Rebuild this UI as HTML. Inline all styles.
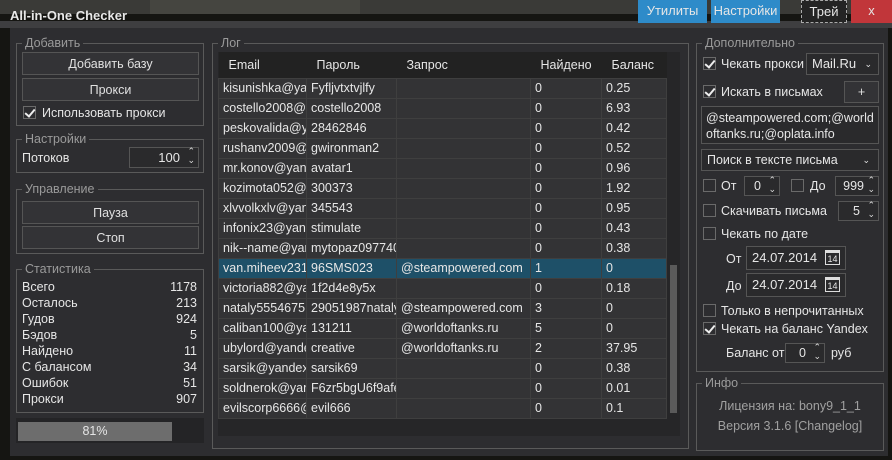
<!DOCTYPE html>
<html><head><meta charset="utf-8"><style>
*{box-sizing:border-box;margin:0;padding:0}
body{width:892px;height:460px;overflow:hidden;background:#151512;font-family:"Liberation Sans","DejaVu Sans",sans-serif;font-size:12.5px;color:#e6e6e6;position:relative}
.a{position:absolute}
.grp{position:absolute;border:1px solid #5a5a5a}
.gl{position:absolute;top:-8px;left:5px;background:#2d2d30;color:#9a9a9a;padding:0 3px;font-size:12.5px;line-height:14px}
.btn{position:absolute;border:1px solid #555;background:#333336;text-align:center;line-height:20px;color:#e0e0e0}
.cb{position:absolute;width:13px;height:13px;border:1px solid #6a6a6a;background:#2d2d30}
.cb.on::after{content:"";position:absolute;left:3px;top:0px;width:4px;height:8px;border:solid #eee;border-width:0 2px 2px 0;transform:rotate(40deg)}
.inp{position:absolute;border:1px solid #555;background:#2a2a2c;overflow:hidden}
.spin{position:absolute;border:1px solid #555;background:#2a2a2c;text-align:right;padding-right:18px;line-height:18px}
.spin::after{content:"⌃\A⌄";white-space:pre;position:absolute;right:3px;top:-1px;font-size:9px;line-height:9px;color:#ddd}
table{border-collapse:collapse;position:absolute;left:218px;top:52px;table-layout:fixed;width:448px}
td,th{height:20px;border:1px solid #3f3f3f;padding:0 4px;white-space:nowrap;overflow:hidden;text-overflow:clip;text-align:left;font-weight:normal}
th{height:26px;background:#222;border:none;padding-left:10px}
td{background:#333335}
tr.sel td{background:#1e5068}
.st{position:absolute;left:22px;width:175px;line-height:16px}
.st span{float:right}
</style></head><body>
<div class="a" style="left:0;top:0;width:892px;height:14px;background:#3a3a37"></div>
<div class="a" style="left:150px;top:0;width:210px;height:14px;background:#454540"></div>
<div class="a" style="left:0;top:21px;width:892px;height:7px;background:#3e3e40"></div>
<div class="a" style="left:10px;top:28px;width:878px;height:428px;background:#2d2d30"></div>
<div class="a" style="left:10px;top:8px;font-weight:bold;font-size:13px;color:#e8e8e8">All-in-One Checker</div>
<div class="a" style="left:638px;top:0;width:69px;height:23px;background:#2e8bc9;text-align:center;line-height:22px;font-size:13px">Утилиты</div>
<div class="a" style="left:711px;top:0;width:69px;height:23px;background:#2e8bc9;text-align:center;line-height:22px;font-size:13px">Настройки</div>
<div class="a" style="left:801px;top:0;width:46px;height:23px;background:#242424;border:1px dashed #aaa;text-align:center;line-height:21px;font-size:13px">Трей</div>
<div class="a" style="left:851px;top:0;width:41px;height:23px;background:#c1363a;text-align:center;line-height:22px;font-size:13px">x</div>

<div class="grp" style="left:16px;top:43px;width:188px;height:83px"><div class="gl">Добавить</div></div>
<div class="btn" style="left:22px;top:52px;width:177px;height:23px;line-height:22px">Добавить базу</div>
<div class="btn" style="left:22px;top:78px;width:177px;height:23px;line-height:22px">Прокси</div>
<div class="cb on" style="left:23px;top:106px"></div><div class="a" style="left:42px;top:106px">Использовать прокси</div>

<div class="grp" style="left:16px;top:139px;width:188px;height:34px"><div class="gl">Настройки</div></div>
<div class="a" style="left:22px;top:151px">Потоков</div>
<div class="spin" style="left:129px;top:147px;width:70px;height:21px;line-height:19px;font-size:13px">100</div>

<div class="grp" style="left:16px;top:189px;width:188px;height:65px"><div class="gl">Управление</div></div>
<div class="btn" style="left:22px;top:201px;width:177px;height:23px;line-height:22px">Пауза</div>
<div class="btn" style="left:22px;top:226px;width:177px;height:23px;line-height:22px">Стоп</div>

<div class="grp" style="left:16px;top:269px;width:188px;height:144px"><div class="gl">Статистика</div></div>
<div class="st" style="top:279px">Всего<span>1178</span></div>
<div class="st" style="top:295px">Осталось<span>213</span></div>
<div class="st" style="top:311px">Гудов<span>924</span></div>
<div class="st" style="top:327px">Бэдов<span>5</span></div>
<div class="st" style="top:343px">Найдено<span>11</span></div>
<div class="st" style="top:359px">С балансом<span>34</span></div>
<div class="st" style="top:375px">Ошибок<span>51</span></div>
<div class="st" style="top:391px">Прокси<span>907</span></div>
<div class="a" style="left:16px;top:418px;width:188px;height:25px;background:#242426"></div>
<div class="a" style="left:18px;top:422px;width:154px;height:19px;background:#6d6d6d;text-align:center;line-height:19px">81%</div>

<div class="grp" style="left:212px;top:43px;width:477px;height:406px"><div class="gl">Лог</div></div>
<div class="a" style="left:218px;top:52px;width:462px;height:384px;background:#262628"></div>
<table>
<colgroup><col style="width:88px"><col style="width:90px"><col style="width:134px"><col style="width:71px"><col style="width:65px"></colgroup>
<tr><th>Email</th><th>Пароль</th><th>Запрос</th><th>Найдено</th><th>Баланс</th></tr>
<tr><td>kisunishka@yandex.ru</td><td>Fyfljvtxtvjlfy</td><td></td><td>0</td><td>0.25</td></tr>
<tr><td>costello2008@yandex.ru</td><td>costello2008</td><td></td><td>0</td><td>6.93</td></tr>
<tr><td>peskovalida@yandex.ru</td><td>28462846</td><td></td><td>0</td><td>0.42</td></tr>
<tr><td>rushanv2009@yandex.ru</td><td>gwironman2</td><td></td><td>0</td><td>0.52</td></tr>
<tr><td>mr.konov@yandex.ru</td><td>avatar1</td><td></td><td>0</td><td>0.96</td></tr>
<tr><td>kozimota052@yandex.ru</td><td>300373</td><td></td><td>0</td><td>1.92</td></tr>
<tr><td>xlvvolkxlv@yandex.ru</td><td>345543</td><td></td><td>0</td><td>0.95</td></tr>
<tr><td>infonix23@yandex.ru</td><td>stimulate</td><td></td><td>0</td><td>0.43</td></tr>
<tr><td>nik--name@yandex.ru</td><td>mytopaz097740</td><td></td><td>0</td><td>0.38</td></tr>
<tr class="sel"><td>van.miheev2312@yandex.ru</td><td>96SMS023</td><td>@steampowered.com</td><td>1</td><td>0</td></tr>
<tr><td>victoria882@yandex.ru</td><td>1f2d4e8y5x</td><td></td><td>0</td><td>0.18</td></tr>
<tr><td>nataly5554675@yandex.ru</td><td>29051987nataly</td><td>@steampowered.com</td><td>3</td><td>0</td></tr>
<tr><td>caliban100@yandex.ru</td><td>131211</td><td>@worldoftanks.ru</td><td>5</td><td>0</td></tr>
<tr><td>ubylord@yandex.ru</td><td>creative</td><td>@worldoftanks.ru</td><td>2</td><td>37.95</td></tr>
<tr><td>sarsik@yandex.ru</td><td>sarsik69</td><td></td><td>0</td><td>0.38</td></tr>
<tr><td>soldnerok@yandex.ru</td><td>F6zr5bgU6f9afe</td><td></td><td>0</td><td>0.01</td></tr>
<tr><td>evilscorp6666@yandex.ru</td><td>evil666</td><td></td><td>0</td><td>0.1</td></tr>
</table>
<div class="a" style="left:670px;top:265px;width:7px;height:148px;background:#5a5a5a"></div>

<div class="grp" style="left:696px;top:43px;width:188px;height:329px"><div class="gl">Дополнительно</div></div>
<div class="cb on" style="left:703px;top:57px"></div><div class="a" style="left:721px;top:57px">Чекать прокси</div>
<div class="inp" style="left:806px;top:53px;width:73px;height:22px;line-height:20px;padding-left:5px;font-size:13px">Mail.Ru<span style="position:absolute;right:6px;font-size:9px">⌄</span></div>
<div class="cb on" style="left:703px;top:85px"></div><div class="a" style="left:721px;top:85px">Искать в письмах</div>
<div class="btn" style="left:844px;top:81px;width:35px;height:22px">+</div>
<div class="inp" style="left:701px;top:106px;width:178px;height:38px;padding:3px 4px;line-height:16px;word-break:break-all">@steampowered.com;@worldoftanks.ru;@oplata.info</div>
<div class="inp" style="left:701px;top:149px;width:178px;height:22px;line-height:20px;padding-left:5px">Поиск в тексте письма<span style="position:absolute;right:8px;font-size:9px">⌄</span></div>
<div class="cb" style="left:703px;top:179px"></div><div class="a" style="left:721px;top:179px">От</div>
<div class="spin" style="left:744px;top:176px;width:36px;height:20px">0</div>
<div class="cb" style="left:791px;top:179px"></div><div class="a" style="left:810px;top:179px">До</div>
<div class="spin" style="left:835px;top:176px;width:44px;height:20px;padding-right:14px">999</div>
<div class="cb" style="left:703px;top:204px"></div><div class="a" style="left:721px;top:204px">Скачивать письма</div>
<div class="spin" style="left:838px;top:201px;width:41px;height:20px">5</div>
<div class="cb" style="left:703px;top:227px"></div><div class="a" style="left:721px;top:227px">Чекать по дате</div>
<div class="a" style="left:726px;top:252px">От</div>
<div class="inp" style="left:746px;top:246px;width:100px;height:24px;line-height:22px;padding-left:5px;font-size:13px">24.07.2014<span style="position:absolute;right:5px;top:3px;width:15px;height:15px;border:1px solid #ddd;font-size:9px;line-height:12px;text-align:center;border-top-width:3px">14</span></div>
<div class="a" style="left:726px;top:279px">До</div>
<div class="inp" style="left:746px;top:273px;width:100px;height:24px;line-height:22px;padding-left:5px;font-size:13px">24.07.2014<span style="position:absolute;right:5px;top:3px;width:15px;height:15px;border:1px solid #ddd;font-size:9px;line-height:12px;text-align:center;border-top-width:3px">14</span></div>
<div class="cb" style="left:703px;top:304px"></div><div class="a" style="left:721px;top:304px">Только в непрочитанных</div>
<div class="cb on" style="left:703px;top:322px"></div><div class="a" style="left:721px;top:322px">Чекать на баланс Yandex</div>
<div class="a" style="left:726px;top:346px">Баланс от</div>
<div class="spin" style="left:785px;top:343px;width:40px;height:20px">0</div>
<div class="a" style="left:831px;top:346px">руб</div>

<div class="grp" style="left:696px;top:383px;width:188px;height:68px"><div class="gl">Инфо</div></div>
<div class="a" style="left:696px;top:399px;width:188px;text-align:center;color:#a0a0a0">Лицензия на: bony9_1_1</div>
<div class="a" style="left:696px;top:419px;width:188px;text-align:center;color:#a0a0a0">Версия 3.1.6 [Changelog]</div>
</body></html>
